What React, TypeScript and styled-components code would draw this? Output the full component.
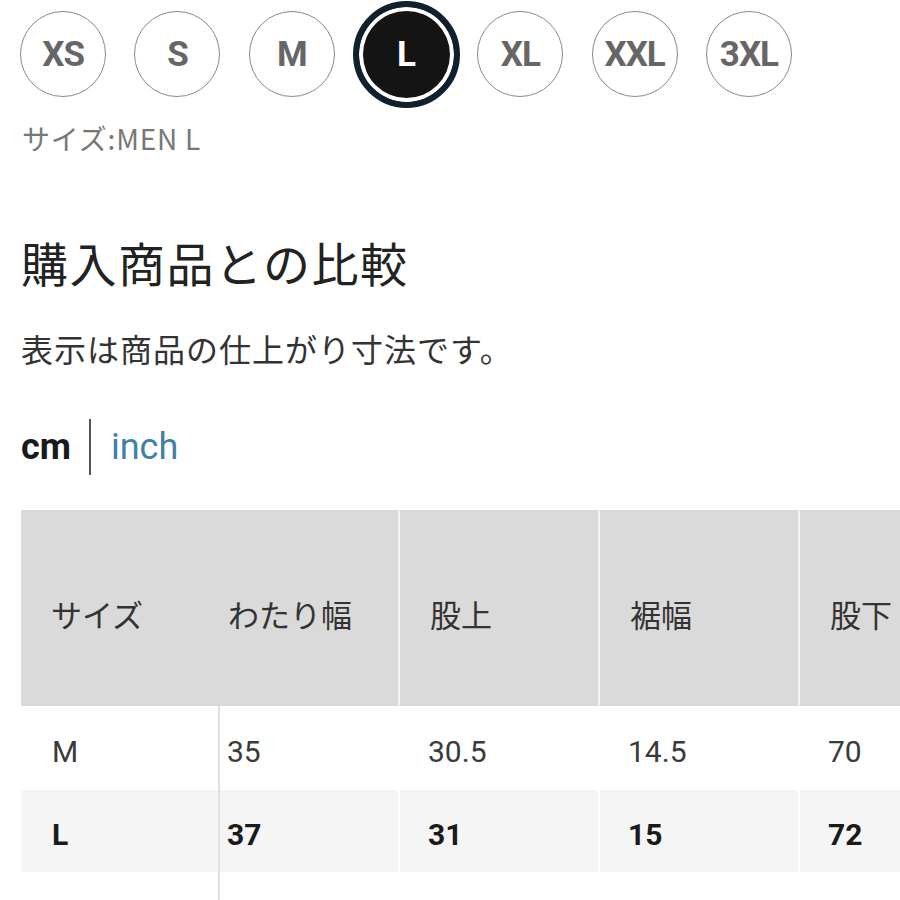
import React from 'react'
import styled, { createGlobalStyle } from 'styled-components'

const GlobalStyle = createGlobalStyle`
    html, body {
        margin: 0;
        padding: 0;
        background: #ffffff;
        overflow: hidden;
    }
    body {
        font-family: Roboto, "Noto Sans CJK JP", sans-serif;
        color: #222;
    }
`

const Page = styled.div`
    width: 900px;
    height: 900px;
    overflow: hidden;
`

const SizeRow = styled.div`
    display: flex;
    align-items: center;
    height: 108px;
    padding-left: 6px;
`

const SizeSlot = styled.div`
    width: 114.3px;
    flex: none;
    display: flex;
    justify-content: center;
    align-items: center;
`

const SizeChip = styled.div<{ $active?: boolean }>`
    box-sizing: border-box;
    flex: none;
    display: flex;
    justify-content: center;
    align-items: center;
    border-radius: 50%;
    font-family: Roboto, "Liberation Sans", sans-serif;
    font-weight: 700;
    font-size: 35px;
    letter-spacing: -1px;
    width: ${p => (p.$active ? '107px' : '86px')};
    height: ${p => (p.$active ? '107px' : '86px')};
    border: ${p => (p.$active ? '6px solid #10202c' : '1.5px solid #8a8a8a')};
    background: ${p => (p.$active ? '#141414' : '#ffffff')};
    color: ${p => (p.$active ? '#ffffff' : '#666666')};
    box-shadow: ${p => (p.$active ? 'inset 0 0 0 4px #ffffff' : 'none')};
`

const SizeCaption = styled.div`
    margin: 12px 0 0 22px;
    font-family: "Noto Sans CJK JP", sans-serif;
    font-size: 28px;
    letter-spacing: 0.8px;
    line-height: 36px;
    color: #777;
`

const Content = styled.div`
    padding-left: 21px;
`

const Title = styled.h2`
    margin: 76px 0 0 0;
    font-family: "Noto Sans CJK JP", sans-serif;
    font-weight: 400;
    font-size: 47px;
    letter-spacing: 1.5px;
    line-height: 60px;
    color: #222;
`

const Note = styled.p`
    margin: 34px 0 0 0;
    font-family: "Noto Sans CJK JP", sans-serif;
    font-size: 32px;
    letter-spacing: 1px;
    line-height: 44px;
    color: #333;
`

const UnitSwitch = styled.div`
    display: flex;
    align-items: center;
    margin-top: 49px;
    height: 56px;
`

const Unit = styled.span<{ $active?: boolean }>`
    font-family: Roboto, "Liberation Sans", sans-serif;
    font-size: 36px;
    font-weight: ${p => (p.$active ? 700 : 400)};
    color: ${p => (p.$active ? '#1a1a1a' : '#3f80a8')};
`

const UnitDivider = styled.div`
    width: 2px;
    height: 56px;
    background: #555;
    margin: 0 20px 0 18px;
`

const Table = styled.div`
    margin-top: 35px;
    width: 1000px;
`

const Row = styled.div<{ $cols: string; $bg: string; $height: number }>`
    display: grid;
    grid-template-columns: ${p => p.$cols};
    height: ${p => p.$height}px;
    background: ${p => p.$bg};
`

const HeadCell = styled.div<{ $divider?: boolean }>`
    display: flex;
    align-items: center;
    padding: 10px 0 0 30px;
    font-family: "Noto Sans CJK JP", sans-serif;
    font-size: 31px;
    color: #333;
    border-left: ${p => (p.$divider ? '2px solid #f4f4f4' : 'none')};
`

const BodyCell = styled.div<{ $bold?: boolean; $first?: boolean; $divider?: boolean; $pad: number }>`
    display: flex;
    align-items: center;
    padding-left: ${p => p.$pad}px;
    padding-top: 6px;
    font-family: Roboto, "Noto Sans CJK JP", sans-serif;
    font-size: 30px;
    font-weight: ${p => (p.$bold ? 700 : 400)};
    color: ${p => (p.$bold ? '#1a1a1a' : '#3a3a3a')};
    border-right: ${p => (p.$first ? '2px solid #e0e0e0' : 'none')};
    border-left: ${p => (p.$divider ? '2px solid #ffffff' : 'none')};
`

const sizes = ['XS', 'S', 'M', 'L', 'XL', 'XXL', '3XL']
const headers = ['わたり幅', '股上', '裾幅', '股下']
const rows = [
    { size: 'M', values: ['35', '30.5', '14.5', '70'], bold: false, bg: '#ffffff', h: 84 },
    { size: 'L', values: ['37', '31', '15', '72'], bold: true, bg: '#f5f5f5', h: 82 },
    { size: '', values: ['', '', '', ''], bold: false, bg: '#ffffff', h: 84 },
]

const headCols = '177px 200px 200px 200px 200px'
const bodyCols = '199px 178px 200px 200px 200px'

const App = () => {
    return (
        <Page>
            <GlobalStyle />
            <SizeRow>
                {sizes.map(s => (
                    <SizeSlot key={s}>
                        <SizeChip $active={s === 'L'}>{s}</SizeChip>
                    </SizeSlot>
                ))}
            </SizeRow>
            <SizeCaption>サイズ:MEN L</SizeCaption>
            <Content>
                <Title>購入商品との比較</Title>
                <Note>表示は商品の仕上がり寸法です。</Note>
                <UnitSwitch>
                    <Unit $active>cm</Unit>
                    <UnitDivider />
                    <Unit>inch</Unit>
                </UnitSwitch>
                <Table>
                    <Row $cols={headCols} $bg='#dadada' $height={196}>
                        <HeadCell>サイズ</HeadCell>
                        {headers.map((h, i) => (
                            <HeadCell key={h} $divider={i > 0}>{h}</HeadCell>
                        ))}
                    </Row>
                    {rows.map((r, ri) => (
                        <Row key={ri} $cols={bodyCols} $bg={r.bg} $height={r.h}>
                            <BodyCell $first $bold={r.bold} $pad={31}>{r.size}</BodyCell>
                            {r.values.map((v, i) => (
                                <BodyCell key={i} $bold={r.bold} $divider={i > 0} $pad={i === 0 ? 7 : 28}>
                                    {v}
                                </BodyCell>
                            ))}
                        </Row>
                    ))}
                </Table>
            </Content>
        </Page>
    )
}

export default App
